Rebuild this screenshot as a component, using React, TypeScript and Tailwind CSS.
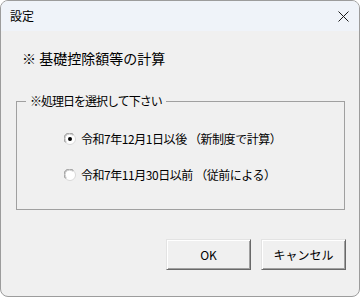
import React from "react";

const font = { fontFamily: '"Noto Sans CJK JP", "Noto Sans", sans-serif' };

function Radio({ checked }: { checked: boolean }) {
  return (
    <svg width="12" height="12" viewBox="0 0 12 12" className="shrink-0">
      <circle cx="6" cy="6" r="5.5" fill="#ffffff" stroke="#d8d8d8" />
      <path d="M1.6 9.4 A5 5 0 0 1 9.4 1.6" fill="none" stroke="#8a8a8a" strokeWidth="1" />
      <path d="M2.4 8.6 A4 4 0 0 1 8.6 2.4" fill="none" stroke="#c8c8c8" strokeWidth="1" />
      {checked && <circle cx="6" cy="6" r="2" fill="#000000" />}
    </svg>
  );
}

function Btn({ label }: { label: string }) {
  return (
    <button className="w-[85px] h-[31px] bg-[#f0f0f0] border border-t-[#e3e3e3] border-l-[#e3e3e3] border-r-[#696969] border-b-[#696969] shadow-[inset_1px_1px_#ffffff,inset_-1px_-1px_#a0a0a0] text-[12px] leading-[16px] text-black flex items-center justify-center">
      {label}
    </button>
  );
}

export default function App() {
  return (
    <div className="w-[360px] h-[297px] bg-white" style={font}>
      <div className="w-[360px] h-[297px] border border-[#9c9c9c] rounded-[8px] overflow-hidden flex flex-col bg-[#f0f0f0]">
        <div className="h-[30px] bg-[#eff3f9] flex items-center justify-between pl-[9px] pr-[10px] shrink-0">
          <span className="text-[12px] leading-[16px] text-black">設定</span>
          <svg width="11" height="11" viewBox="0 0 11 11">
            <path d="M0.5 0.5 L10.5 10.5 M10.5 0.5 L0.5 10.5" stroke="#1a1a1a" strokeWidth="1" fill="none" />
          </svg>
        </div>
        <div className="flex-1 flex flex-col">
          <div className="pt-[17px] pl-[21px] text-[14px] leading-[20px] text-black">※ 基礎控除額等の計算</div>
          <fieldset className="mt-[25px] ml-[15px] w-[329px] h-[117px] border border-[#a0a0a0] px-0 m-0">
            <legend className="ml-[9px] px-[4px] text-[12px] leading-[16px] tracking-[-1px] text-black">※処理日を選択して下さい</legend>
            <div className="pl-[47px] pt-[22px] flex flex-col gap-[20px]">
              <div className="flex items-center gap-[5px] h-[16px]">
                <Radio checked />
                <span className="text-[12px] leading-[16px] tracking-[-0.45px] text-black">令和7年12月1日以後 （新制度で計算）</span>
              </div>
              <div className="flex items-center gap-[5px] h-[16px]">
                <Radio checked={false} />
                <span className="text-[12px] leading-[16px] tracking-[-0.45px] text-black">令和7年11月30日以前 （従前による）</span>
              </div>
            </div>
          </fieldset>
          <div className="flex-1" />
          <div className="flex justify-end gap-[10px] pr-[13px] pb-[26px]">
            <Btn label="OK" />
            <Btn label="キャンセル" />
          </div>
        </div>
      </div>
    </div>
  );
}
